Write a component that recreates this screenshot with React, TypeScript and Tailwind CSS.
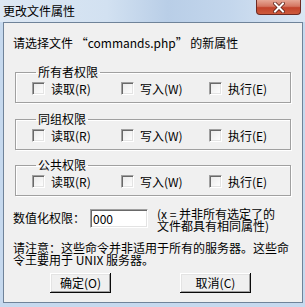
import React from "react";

function Box() {
  return (
    <span className="block w-[13px] h-[13px] shrink-0 border border-t-[#a0a0a0] border-l-[#a0a0a0] border-r-white border-b-white bg-[linear-gradient(135deg,#e9e9e9,#ffffff)] shadow-[inset_1px_1px_0_#696969,inset_-1px_-1px_0_#e3e3e3]" />
  );
}

function Check({ label, w }: { label: string; w: string }) {
  return (
    <div className={`flex items-center gap-[6px] ${w}`}>
      <Box />
      <span className="leading-[13px] whitespace-nowrap">{label}</span>
    </div>
  );
}

function Group({ title, mt }: { title: string; mt: string }) {
  return (
    <fieldset className={`ml-[11px] w-[276px] ${mt} border border-[#a0a0a0] shadow-[inset_1px_1px_0_#fff,1px_1px_0_#fff] pt-[4px] pb-[7px] pl-[16px]`}>
      <legend className="ml-[4px] px-[2px] leading-[12px]">{title}</legend>
      <div className="flex">
        <Check label="读取(R)" w="w-[89px]" />
        <Check label="写入(W)" w="w-[88px]" />
        <Check label="执行(E)" w="w-[70px]" />
      </div>
    </fieldset>
  );
}

function Btn({ label, cls }: { label: string; cls: string }) {
  return (
    <div
      className={`h-[20px] ${cls} flex items-center justify-center bg-[#f0f0f0] leading-[12px] shadow-[inset_-1px_-1px_0_#0a0a0a,inset_1px_1px_0_#ffffff,inset_-2px_-2px_0_#a0a0a0,inset_2px_2px_0_#e3e3e3]`}
    >
      {label}
    </div>
  );
}

function Line({ children }: { children: React.ReactNode }) {
  return <div className="h-[12px] leading-[12px] whitespace-nowrap">{children}</div>;
}

export default function App() {
  return (
    <div className="w-[305px] h-[307px] bg-[#c6d9ee] flex flex-col text-[12px] text-black font-['Noto_Sans_CJK_SC','Noto_Sans',sans-serif] overflow-hidden">
      <div className="h-[22px] shrink-0 flex items-start justify-between bg-[linear-gradient(90deg,#dde8f4_0%,#d2e1f1_35%,#b9cee7_55%,#c3d6ec_75%,#dae6f3_100%)]">
        <span className="ml-[3px] mt-[5px] leading-[12px] text-[12px] whitespace-nowrap">更改文件属性</span>
        <div className="mr-[4px] w-[45px] h-[15px] rounded-b-[4px] border border-t-0 border-[#6e2a22] bg-[linear-gradient(180deg,#e6a796_0%,#d47661_45%,#c2432b_55%,#cd5a3c_100%)] flex items-center justify-center">
          <svg width="12" height="11" viewBox="0 0 12 11">
            <path d="M2 1.5 L10 9.5 M10 1.5 L2 9.5" stroke="#5a1d14" strokeWidth="3.6" strokeLinecap="square" />
            <path d="M2 1.5 L10 9.5 M10 1.5 L2 9.5" stroke="#ffffff" strokeWidth="2" strokeLinecap="square" />
          </svg>
        </div>
      </div>
      <div className="ml-[3px] w-[300px] h-[281px] shrink-0 border border-[#6f8399] bg-[#f0f0f0] flex flex-col">
        <p className="mt-[14px] ml-[9px] leading-[12px] whitespace-nowrap">
          请选择文件 “commands.php” 的新属性
        </p>
        <Group title="所有者权限" mt="mt-[17px]" />
        <Group title="同组权限" mt="mt-[10px]" />
        <Group title="公共权限" mt="mt-[9px]" />
        <div className="mt-[11px] flex items-start">
          <span className="ml-[9px] w-[77px] mt-[5px] leading-[12px] whitespace-nowrap">数值化权限：</span>
          <div className="w-[58px] h-[19px] mt-[2px] border border-t-[#a0a0a0] border-l-[#a0a0a0] border-r-white border-b-white bg-white shadow-[inset_1px_1px_0_#696969,inset_-1px_-1px_0_#e3e3e3] pl-[2px] flex items-center leading-[12px]">
            000
          </div>
          <div className="ml-[9px] mt-[1px] flex flex-col">
            <Line>(x = 并非所有选定了的</Line>
            <Line>文件都具有相同属性)</Line>
          </div>
        </div>
        <div className="mt-[10px] ml-[9px] flex flex-col">
          <Line>请注意：这些命令并非适用于所有的服务器。这些命</Line>
          <Line>令王要用于 UNIX 服务器。</Line>
        </div>
        <div className="mt-[7px] flex">
          <Btn label="确定(O)" cls="ml-[46px] w-[61px]" />
          <Btn label="取消(C)" cls="ml-[69px] w-[71px]" />
        </div>
      </div>
    </div>
  );
}
